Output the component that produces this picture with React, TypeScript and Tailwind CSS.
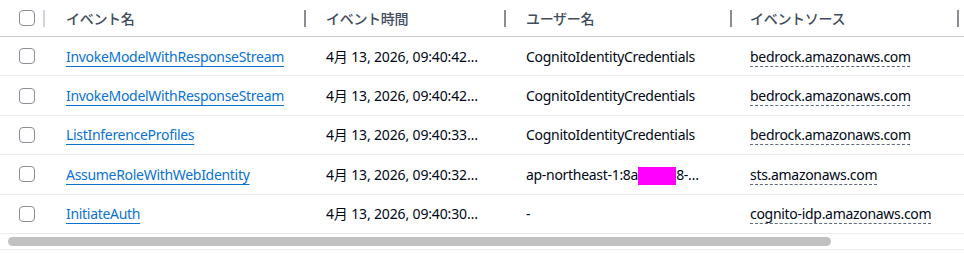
import React from 'react';

const rows = [
  { name: 'InvokeModelWithResponseStream', time: '4月 13, 2026, 09:40:42 (UTC+09:00)', user: 'CognitoIdentityCredentials', source: 'bedrock.amazonaws.com' },
  { name: 'InvokeModelWithResponseStream', time: '4月 13, 2026, 09:40:42 (UTC+09:00)', user: 'CognitoIdentityCredentials', source: 'bedrock.amazonaws.com' },
  { name: 'ListInferenceProfiles', time: '4月 13, 2026, 09:40:33 (UTC+09:00)', user: 'CognitoIdentityCredentials', source: 'bedrock.amazonaws.com' },
  { name: 'AssumeRoleWithWebIdentity', time: '4月 13, 2026, 09:40:32 (UTC+09:00)', user: 'masked', source: 'sts.amazonaws.com' },
  { name: 'InitiateAuth', time: '4月 13, 2026, 09:40:30 (UTC+09:00)', user: '-', source: 'cognito-idp.amazonaws.com' },
];

const Checkbox = () => (
  <span className="block w-[16px] h-[16px] rounded-[4px] border-[1.5px] border-[#8c8c94] bg-white" />
);

const Sep = ({ light }: { light?: boolean }) => (
  <span className={`block w-[2px] h-[17px] ${light ? 'bg-[#d1d5db]' : 'bg-[#8c8c94]'}`} />
);

export default function App() {
  return (
    <div
      className="w-[964px] h-[253px] bg-white overflow-hidden text-[14px] tracking-[-0.3px] text-[#000716]"
      style={{ fontFamily: '"Noto Sans", "Noto Sans CJK JP", sans-serif' }}
    >
      {/* ヘッダー */}
      <div className="flex items-center h-[37px] border-b border-[#c6c6cd] font-medium text-[#414d5c]">
        <div className="w-[66px] flex items-center pl-[19px]">
          <Checkbox />
          <span className="ml-[8px]"><Sep light /></span>
        </div>
        <div className="w-[260px] flex items-center justify-between pr-[20px]">
          <span>イベント名</span>
          <Sep />
        </div>
        <div className="w-[200px] flex items-center justify-between pr-[20px]">
          <span>イベント時間</span>
          <Sep />
        </div>
        <div className="w-[224px] flex items-center justify-between pr-[18px]">
          <span>ユーザー名</span>
          <Sep />
        </div>
        <div className="w-[214px] flex items-center justify-between pr-[5px]">
          <span>イベントソース</span>
          <Sep />
        </div>
      </div>

      {/* 行 */}
      {rows.map((r, i) => (
        <div key={i} className="flex items-center h-[39.4px] border-b border-[#e9ebed]">
          <div className="w-[66px] pl-[19px]">
            <Checkbox />
          </div>
          <div className="w-[260px]">
            <span className="text-[#0972d3] underline underline-offset-[4px] decoration-1">{r.name}</span>
          </div>
          <div className="w-[200px] pr-[46px] truncate tracking-[-0.15px]">{r.time}</div>
          <div className="w-[224px] pr-[20px] truncate">
            {r.user === 'masked' ? (
              <span>
                ap-northeast-1:8a<span className="inline-block w-[38px] h-[18px] align-middle bg-[#ff00ff]" />8-…
              </span>
            ) : (
              r.user
            )}
          </div>
          <div className="w-[214px]">
            <span className="underline decoration-dashed decoration-[#5f6b7a] underline-offset-[4px] decoration-1">
              {r.source}
            </span>
          </div>
        </div>
      ))}

      {/* スクロールバー */}
      <div className="h-[16px] pt-[3px] pl-[8px] border-b border-[#e9ebed]">
        <div className="w-[823px] h-[9px] rounded-full bg-[#c1c1c1]" />
      </div>
    </div>
  );
}
